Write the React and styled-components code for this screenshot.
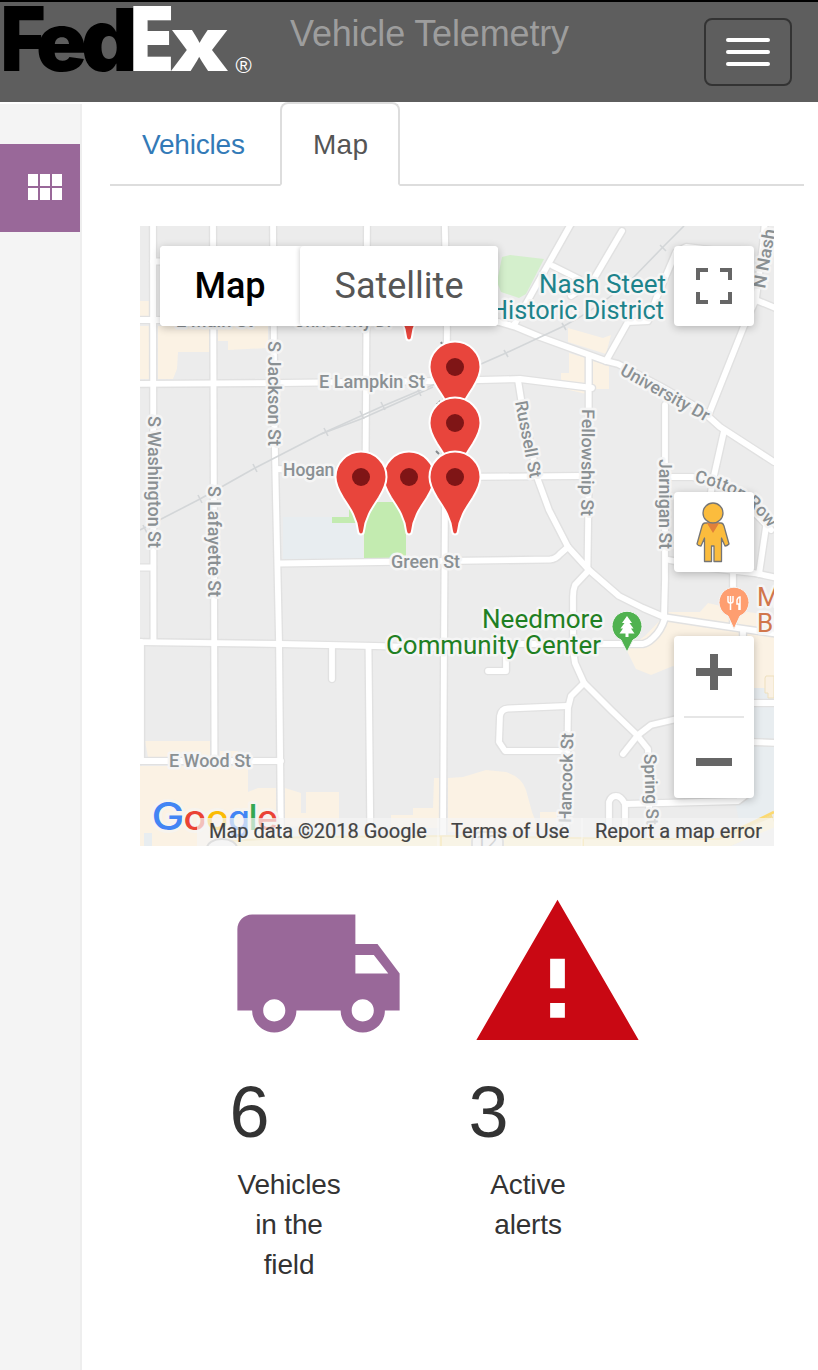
import React from 'react';
import styled, { createGlobalStyle, css } from 'styled-components';
import { MdLocalShipping, MdWarning } from 'react-icons/md';

const Global = createGlobalStyle`
  * { box-sizing: border-box; }
  body { margin: 0; background: #fff; color: #333; font-family: 'Liberation Sans', Arial, sans-serif; font-size: 28px; line-height: 40px; }
`;

const Page = styled.div`
  display: flex;
  flex-direction: column;
  min-height: 1370px;
`;
const Header = styled.header`
  display: flex;
  align-items: flex-start;
  height: 102px;
  padding: 0 26px 0 0;
  background: #5e5e5e;
  border-top: 2px solid #000;
`;
const Logo = styled.svg`
  display: block;
  width: 260px;
  height: 96px;
  font-family: 'Inter', sans-serif;
  font-weight: 900;
`;
const Title = styled.h1`
  margin: 12px 0 0 30px;
  font-size: 36px;
  line-height: 40px;
  font-weight: 400;
  letter-spacing: -0.15px;
  color: #9d9d9d;
  white-space: nowrap;
`;
const MenuButton = styled.button`
  display: flex;
  flex-direction: column;
  align-items: center;
  justify-content: center;
  gap: 8px;
  width: 88px;
  height: 68px;
  margin: 16px 0 0 auto;
  padding: 0;
  background: transparent;
  border: 2px solid #333;
  border-radius: 8px;
`;
const MenuBar = styled.span`
  width: 44px;
  height: 4px;
  border-radius: 2px;
  background: #fff;
`;
const Body = styled.div`
  display: flex;
  flex: 1;
`;
const Sidebar = styled.aside`
  width: 82px;
  margin-top: 2px;
  padding-top: 40px;
  background: #f4f4f4;
  border-right: 2px solid #eee;
`;
const SideItem = styled.a`
  display: flex;
  align-items: center;
  height: 88px;
  padding: 0 0 2px 28px;
  background: #996899;
`;
const Grid = styled.span`
  display: grid;
  grid-template-columns: repeat(3, 10px);
  grid-auto-rows: 12px;
  gap: 2px;
`;
const GridCell = styled.i`
  background: #fff;
`;
const Content = styled.main`
  flex: 1;
  padding: 0 14px 0 28px;
`;
const Tabs = styled.nav`
  display: flex;
  height: 84px;
  border-bottom: 2px solid #ddd;
`;
const Tab = styled.a`
  height: 84px;
  padding: 21px 0 0 30px;
  border: 2px solid transparent;
  border-radius: 8px 8px 0 0;
  color: #337ab7;
  letter-spacing: -0.2px;
  ${(p) => p.$active && css`
    padding-left: 31px;
    letter-spacing: 0.3px;
    color: #555;
    background: #fff;
    border-color: #ddd #ddd #fff;
  `}
  ${(p) => css`width: ${p.$width}px;`}
`;
const MapFrame = styled.section`
  position: relative;
  width: 634px;
  height: 620px;
  margin: 40px 0 0 30px;
  overflow: hidden;
  font-family: Roboto, sans-serif;
`;
const MapCanvas = styled.svg`
  display: block;
  width: 634px;
  height: 620px;
  font-family: Roboto, sans-serif;
`;
const Control = styled.div`
  position: absolute;
  display: flex;
  background: #fff;
  border-radius: 4px;
  box-shadow: 0 2px 8px rgba(0, 0, 0, 0.24);
  top: ${(p) => p.$top}px;
`;
const TypeSwitch = styled(Control)`
  left: 20px;
  width: 338px;
  height: 80px;
`;
const TypeOption = styled.button`
  flex: 0 0 ${(p) => p.$width}px;
  padding: 0;
  border: 0;
  border-radius: 4px;
  background: #fff;
  font: ${(p) => (p.$active ? 500 : 400)} 36px Roboto, sans-serif;
  color: ${(p) => (p.$active ? '#000' : '#565656')};
  ${(p) => !p.$active && css`
    box-shadow: -2px 0 4px -1px rgba(0, 0, 0, 0.16);
    clip-path: inset(0 0 0 -5px);
  `}
`;
const SquareControl = styled(Control)`
  right: 20px;
  width: 80px;
  height: 80px;
`;
const ZoomControl = styled(Control)`
  right: 20px;
  flex-direction: column;
  align-items: center;
  width: 80px;
  height: 162px;
`;
const ZoomDivider = styled.div`
  width: 60px;
  height: 2px;
  background: #e6e6e6;
`;
const Icon = styled.svg`
  display: block;
  width: 80px;
  height: 80px;
  fill: #666;
`;
const Attribution = styled.footer`
  position: absolute;
  right: 0;
  bottom: 0;
  display: flex;
  width: 577px;
  height: 28px;
  font-size: 20px;
  line-height: 27px;
  color: #444;
`;
const Credit = styled.span`
  flex: ${(p) => (p.$last ? 1 : `0 0 ${p.$width}px`)};
  padding-left: 12px;
  background: rgba(245, 245, 245, 0.7);
  border-right: ${(p) => (p.$last ? 0 : '2px solid rgba(250, 250, 250, 0.4)')};
  -webkit-text-stroke: 0.2px #444;
  white-space: nowrap;
`;
const Stats = styled.section`
  display: flex;
  margin: 39px 0 0 119.5px;
`;
const Stat = styled.article`
  width: 239px;
  svg { display: block; height: 177px; }
`;
const StatValue = styled.div`
  margin-top: 11px;
  font-size: 72px;
  line-height: 79px;
`;
const StatLabel = styled.p`
  width: 119px;
  margin: 13px 0 0;
  text-align: center;
  letter-spacing: -0.15px;
`;

const roads = [
  'M153 220L153.5 642', 'M213 220L214 560L214.500 761', 'M273 220L274.500 430L279 640L281 850',
  'M367 220L366 400L365.500 474', 'M368.500 646L370.500 850', 'M444.700 220L447 330L445 500L444 645L443 850',
  'M153 261.500H280', 'M140 320H400L499 322L516 327L540 337L606 361L618 364L660 386L700 409L720 427L774 462',
  'M136 384L280 383L445 381L480 380L520 379L592 388', 'M276 469L300 470L445 477L580 476',
  'M280 563.500L445 561L550 559.500Q556 559 560 554L568 547', 'M136 567.500H153',
  'M136 642L280 644L375 646L445 648', 'M445 644H643Q648 643 653 638Q661 631 665 618', 'M141 642L141 761', 'M136 761H281',
  'M332 646V679', 'M572 222L514 325', 'M622 231L592 282L571 296', 'M553 266L579 279',
  'M740 250L712 250L686 247L676 252L656 299L648 321L628 322L606 361',
  'M588.700 358V480L587.500 568',
  'M518 380L522 405L538 480L549 510L568 547L589 570L619 596L643 608L664 617L703 623L778 634',
  'M589 570L575 585Q573 590 573 597L573 650L575 663L584 683L612 711L636 734L648 749L650 850',
  'M584 683L571 696L568 708L566 850', 'M567 706L508 708.500Q501 709 500 716L499 742L505 751H566',
  'M623 754L638 735L651 725L681 718', 'M488 671H506V648',
  'M609 850V802Q611 796 616 796Q621 796 625 804V850', 'M625 804L738 801L746 795',
  'M665 405L665 580L664 617', 'M724 431L713 480L708 510', 'M765 220L763 244L756 299L744 326L709 414',
  'M756 300L778 309', 'M669 477H692Q708 478 724 488Q746 502 771 530', 'M766 527L759 574',
  'M669 560L710 568L754 573L778 578', 'M733 573V627', 'M743 632V650', 'M750 703H780', 'M750 742L780 743',
];

const pins = [[409, 283], [455, 367], [455, 423], [409, 477], [361, 477], [455, 477]];

const Street = ({ x, y, len, rot = 0, children }) => (
  <text transform={`translate(${x} ${y}) rotate(${rot})`} textLength={len} lengthAdjust="spacingAndGlyphs"
    fontSize="17.500" fontWeight="500" fill="#8a9093" stroke="#f5f5f5" strokeWidth="5" strokeLinejoin="round" paintOrder="stroke">
    {children}
  </text>
);

const Place = ({ x, y, len, color, children }) => (
  <text x={x} y={y} textLength={len} lengthAdjust="spacingAndGlyphs" fontSize="26" fill={color}
    stroke="#f5f5f5" strokeWidth="5" strokeLinejoin="round" paintOrder="stroke">
    {children}
  </text>
);

const Pin = ({ x, y }) => (
  <g transform={`translate(${x} ${y})`}>
    <path fill="#e8453c" stroke="#fff" strokeWidth="2"
      d="M0-25.500C-14-25.500-25.500-14-25.500 0C-25.500 8-22 14-18 20.500C-11 31-4 41-2.800 55Q-2.300 57.500 0 57.500Q2.300 57.500 2.800 55C4 41 11 31 18 20.500C22 14 25.500 8 25.500 0C25.500-14 14-25.500 0-25.500Z" />
    <circle r="9" fill="#7f1516" />
  </g>
);

function StreetMap() {
  return (
    <MapCanvas viewBox="140 226 634 620">
      <rect x="140" y="226" width="634" height="620" fill="#ececec" />
      <g fill="#fbf2e4">
        <path d="M140 301h10v15h-10zM140 326h10v53h-10zM158 326h52v26h-32l-1 17l-4 10h-15zM218 326h50v22l-40 2v-9h-10z" />
        <path d="M568 328l35 10l8-3l-5 19l-38-12zM569 353l17 5v36l-25-6v-15h8zM593 361l16 5v23h-16z" />
        <path d="M645 636L668 612L700 612L708 603L742 611L774 616V690H700L673 666L651 675L636 669L626 649Z" />
        <path d="M145 741h65v16h-62zM220 751h18v7h-18zM140 766H248V792L258 788H276V846H140zM285 788l16 5v20h5v-21h33v31l-54 4z" />
        <path d="M391 815h22v-7h20l1-30h5v50h-48zM448 778l15-1l23-7l20 2q16 5 20 18l6 22l8 20h-92zM540 812h17v16h-17z" />
      </g>
      <g fill="#e8edf0">
        <rect x="283" y="517" width="80" height="42" />
        <path d="M700 688H774V811L740 826L735 801z" /><rect x="144" y="833" width="8" height="13" />
      </g>
      <path d="M332 517h17v-15h57v56h-42v-35h-32z" fill="#c3ebb0" />
      <path d="M502 257l8-2l34 4l-18 35l-7 4l-18-6l-4-10z" fill="#d4efcc" />
      <path d="M766 676h8v22h-6v-5h-3v-15z" fill="#faf1e4" stroke="#eee0bd" />
      <g fill="none" strokeLinejoin="round" strokeLinecap="round">
        {roads.map((d) => <path key={d} d={d} stroke="#e1e1e1" strokeWidth="8.600" />)}
        {roads.map((d) => <path key={d} d={d} stroke="#fff" strokeWidth="5.800" />)}
      </g>
      <path d="M225 846L305 842L450 841L640 844L720 844L774 820" fill="none" stroke="#f3dc94" strokeWidth="12" />
      <path d="M225 847L305 843L450 842L640 845L720 845L774 822" fill="none" stroke="#fdf0c4" strokeWidth="10" />
      <path d="M720 838L774 812" stroke="#fbd971" strokeWidth="2.500" />
      <path d="M441 836v10M583 839v7" stroke="#fbd971" strokeWidth="2" />
      <g fill="none" stroke="#d3d6d8" strokeWidth="1.600">
        <path d="M684 226L663 247L632 279Q600 307 564 326L506 353L440 382L383 406L321 434L255 468L200 499L140 530" />
        <path d="M433 387L361 419L321 434" />
        <path d="M660 245l6 6M562 323l4 7M504 350l4 7M381 402l4 8M417 388l4 8M360 411l4 8M324 428l4 8M253 464l4 8M198 495l4 8M143 525l4 8" />
      </g>

      <Street x={176} y={327} len={77}>E Main St</Street>
      <Street x={294} y={327} len={99}>University Dr</Street>
      <Street x={319} y={388} len={106}>E Lampkin St</Street>
      <Street x={283} y={476} len={101}>Hogan Aly St</Street>
      <Street x={391} y={568} len={69}>Green St</Street>
      <Street x={169} y={767} len={82}>E Wood St</Street>
      <Street x={148} y={416} len={132} rot={90}>S Washington St</Street>
      <Street x={268} y={341} len={105} rot={90}>S Jackson St</Street>
      <Street x={208} y={486} len={111} rot={90}>S Lafayette St</Street>
      <Street x={515} y={402} len={78} rot={79}>Russell St</Street>
      <Street x={582} y={409} len={107} rot={90.500}>Fellowship St</Street>
      <Street x={659} y={459} len={90} rot={90}>Jarnigan St</Street>
      <Street x={619} y={374} len={99} rot={29}>University Dr</Street>
      <Street x={765} y={289} len={60} rot={-80}>N Nash</Street>
      <Street x={571} y={823} len={90} rot={-88.500}>Hancock St</Street>
      <Street x={644} y={754} len={71} rot={88}>Spring St</Street>
      <path id="cotton-row" d="M694 482Q732 489 754 510L782 543" fill="none" />
      <text fontSize="17.500" fontWeight="500" fill="#8a9093" stroke="#f5f5f5" strokeWidth="5" strokeLinejoin="round" paintOrder="stroke">
        <textPath href="#cotton-row">Cotton Row</textPath>
      </text>
      <path d="M441 342l1 2M439 401l3 3M437 403l2 3M436 451l3 3" stroke="#858b8e" strokeWidth="2" />

      <Place x={539} y={293} len={127} color="#1d838b">Nash Steet</Place>
      <Place x={490} y={319} len={174} color="#1d838b">Historic District</Place>
      <Place x={482} y={628} len={121} color="#1f8023">Needmore</Place>
      <Place x={386} y={654} len={215} color="#1f8023">Community Center</Place>
      <Place x={757} y={606} color="#d1764c">Mug</Place>
      <Place x={757} y={632} color="#d1764c">Bar</Place>

      <path d="M627 652L621 640A15 15 0 1 1 633 640Z" fill="#50b250" stroke="#f5f5f5" strokeWidth="1" />
      <path d="M627 616l5 7h-2.500l4 5.500h-2.500l3.500 5h-6v3.500h-3v-3.500h-6l3.500-5h-2.500l4-5.500h-2.500z" fill="#fff" />
      <path d="M734 629L728 616A15 15 0 1 1 740 616Z" fill="#fe9e70" stroke="#f5f5f5" strokeWidth="1" />
      <path d="M728 596v5q0 2 2 2h.500v7M733 596v5q0 2-2 2M730.500 596v7M739 610v-6h-2v-4q1-3 3-3v13" fill="none" stroke="#fff" strokeWidth="1.500" />

      {pins.map(([x, y]) => <Pin key={`${x}-${y}`} x={x} y={y} />)}

      <ellipse cx="222" cy="848" rx="15" ry="9" fill="#f5f5f5" stroke="#a8a8a8" strokeWidth="2" />
      <rect x="472" y="832" width="31" height="22" rx="9" fill="#f5f5f5" stroke="#bdbdbd" strokeWidth="2" />
      <text x="476" y="848" fontSize="19" fill="#858b8e">12</text>

      <g fontFamily="Inter, sans-serif" fontWeight="500" stroke="#f7f4ee" strokeWidth="6" strokeLinejoin="round" paintOrder="stroke">
        <text x="151.500" y="830" fontSize="38.500" textLength="33" lengthAdjust="spacingAndGlyphs" fill="#4285f4">G</text>
        <text x="183.500" y="830" fontSize="34" textLength="23" lengthAdjust="spacingAndGlyphs" fill="#ea4335">o</text>
        <text x="206" y="830" fontSize="34" textLength="23" lengthAdjust="spacingAndGlyphs" fill="#fbbc05">o</text>
        <text x="228" y="830" fontSize="34" textLength="22" lengthAdjust="spacingAndGlyphs" fill="#4285f4">g</text>
        <text x="248.500" y="830" fontSize="36" fill="#34a853">l</text>
        <text x="257" y="830" fontSize="34" textLength="21" lengthAdjust="spacingAndGlyphs" fill="#ea4335">e</text>
      </g>
    </MapCanvas>
  );
}

function FedExLogo() {
  const glyph = (ch, x, size, len, fill) => (
    <text x={x} y="69" fontSize={size} textLength={len} lengthAdjust="spacingAndGlyphs" fill={fill}>{ch}</text>
  );
  return (
    <Logo viewBox="0 0 260 96">
      {glyph('F', 0.5, 90, 45, '#000')}
      {glyph('e', 36, 82, 51, '#000')}
      {glyph('d', 81, 86, 57, '#000')}
      {glyph('E', 130, 90, 44, '#fff')}
      {glyph('x', 170, 76, 59, '#fff')}
      <text x="235.500" y="71" fontSize="22" fontFamily="Liberation Sans, sans-serif" fontWeight="400" fill="#fff">®</text>
    </Logo>
  );
}

export default function App() {
  return (
    <Page>
      <Global />
      <Header>
        <FedExLogo />
        <Title>Vehicle Telemetry</Title>
        <MenuButton aria-label="Menu"><MenuBar /><MenuBar /><MenuBar /></MenuButton>
      </Header>
      <Body>
        <Sidebar>
          <SideItem>
            <Grid>{[0, 1, 2, 3, 4, 5].map((i) => <GridCell key={i} />)}</Grid>
          </SideItem>
        </Sidebar>
        <Content>
          <Tabs>
            <Tab $width={170}>Vehicles</Tab>
            <Tab $active $width={120}>Map</Tab>
          </Tabs>
          <MapFrame>
            <StreetMap />
            <TypeSwitch $top={20}>
              <TypeOption $active $width={140}>Map</TypeOption>
              <TypeOption $width={198}>Satellite</TypeOption>
            </TypeSwitch>
            <SquareControl $top={20}>
              <Icon viewBox="0 0 80 80">
                <path d="M22 22h12v4h-8v8h-4zM46 22h12v12h-4v-8h-8zM22 46h4v8h8v4H22zM54 46h4v12H46v-4h8z" />
              </Icon>
            </SquareControl>
            <SquareControl $top={266}>
              <Icon viewBox="0 0 80 80">
                <g fill="#fbbc3d" stroke="#757575" strokeWidth="1.300" strokeLinejoin="round">
                  <path d="M31 31H47Q49 31 50 34L55 52Q53 54 51 54L47.500 46V69.500H40V54H37.500V69.500H30.500V46L27 54Q24 54 23 52L28 34Q29 31 31 31Z" />
                  <circle cx="39" cy="21" r="10" />
                </g>
                <path d="M32.500 30.500Q39 33 45.500 30.500L39 41z" fill="#e1803a" />
              </Icon>
            </SquareControl>
            <ZoomControl $top={410}>
              <Icon viewBox="0 0 80 80"><path d="M36 18h8v14h14v8H44v14h-8V40H22v-8h14z" /></Icon>
              <ZoomDivider />
              <Icon viewBox="0 0 80 80"><path d="M22 40h36v8H22z" /></Icon>
            </ZoomControl>
            <Attribution>
              <Credit $width={242}>Map data ©2018 Google</Credit>
              <Credit $width={144}>Terms of Use</Credit>
              <Credit $last>Report a map error</Credit>
            </Attribution>
          </MapFrame>
          <Stats>
            <Stat>
              <MdLocalShipping size={177} color="#996899" />
              <StatValue>6</StatValue>
              <StatLabel>Vehicles<br />in the<br />field</StatLabel>
            </Stat>
            <Stat>
              <MdWarning size={177} color="#c90813" />
              <StatValue>3</StatValue>
              <StatLabel>Active<br />alerts</StatLabel>
            </Stat>
          </Stats>
        </Content>
      </Body>
    </Page>
  );
}
